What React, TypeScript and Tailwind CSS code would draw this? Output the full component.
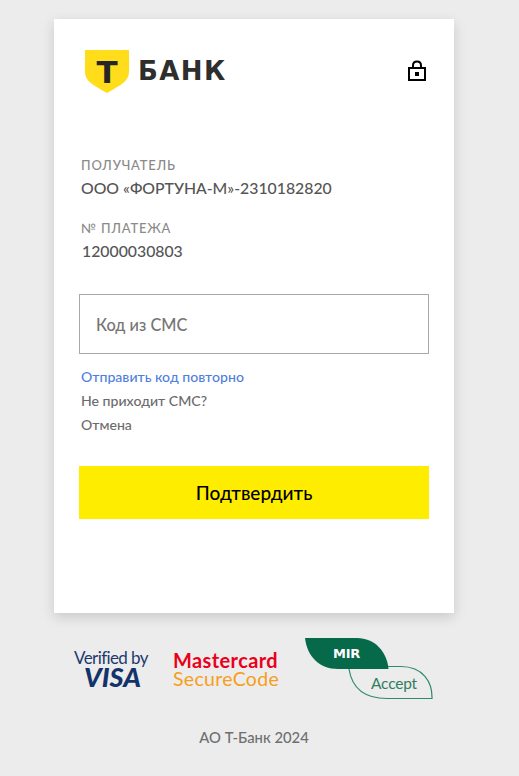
import React from 'react';

const font = { fontFamily: '"Lato", "Noto Sans", sans-serif' };

const Logo: React.FC = () => (
  <div className="flex items-center gap-[10px]">
    <div className="relative w-[44px] h-[43px]">
      <svg width="44" height="43" viewBox="0 0 44 43" className="block">
        <path d="M0 0H44V22C44 31 36 35 22 43C8 35 0 31 0 22Z" fill="#ffdd1a" />
      </svg>
      <span className="absolute inset-x-0 top-[7px] text-center text-[31px] leading-[31px] font-bold text-[#262626] font-['DejaVu_Sans']">
        Т
      </span>
    </div>
    <span className="text-[26px] leading-[26px] font-bold tracking-[1.4px] text-[#2e2e2e] font-['DejaVu_Sans'] mt-[-2px] ml-[-1px]">
      БАНК
    </span>
  </div>
);

const Lock: React.FC = () => (
  <svg width="18" height="21" viewBox="0 0 18 21" className="block">
    <path d="M5 9V5.500C5 3 6.500 1.500 9 1.500S13 3 13 5.500V9" fill="none" stroke="#000" strokeWidth="2" />
    <rect x="1" y="8" width="16" height="12" fill="none" stroke="#000" strokeWidth="2" />
    <rect x="7" y="12" width="4" height="4" fill="#000" />
  </svg>
);

const MirAccept: React.FC = () => (
  <div className="relative w-[128px] h-[62px]">
    <svg width="128" height="62" viewBox="0 0 128 62" className="block">
      <path d="M44 31C47 50 60 60.500 82 60.500H127C127.500 44 118 28.500 96 28.500H83" fill="none" stroke="#2f8a68" strokeWidth="1.200" />
      <path d="M0 0H52C70 0 82 14 83.500 31H33C14 31 2 18 0 0Z" fill="#05694a" />
    </svg>
    <span className="absolute left-[28px] top-[9px] text-[13px] leading-[13px] font-black text-white font-['DejaVu_Sans'] tracking-[-0.3px]">
      MIR
    </span>
    <span className="absolute left-[66px] top-[36px] text-[15.500px] leading-[18px] text-[#2f7f60] font-['Lato'] tracking-[-0.2px]">
      Accept
    </span>
  </div>
);

export default function App() {
  return (
    <div className="min-h-[776px] bg-[#ececec]" style={font}>
      <div className="ml-[54px] w-[454px]">
        <div className="h-[19px]" />
        <div className="w-[400px] h-[594px] bg-white shadow-[0_4px_12px_rgba(0,0,0,0.15)] px-[25px]">
          <div className="flex items-start justify-between pt-[31px] pl-[6px] pr-[3px]">
            <Logo />
            <div className="mt-[10px]">
              <Lock />
            </div>
          </div>

          <div className="mt-[64px] pl-[2px] text-[13px] leading-[16px] tracking-[0.8px] font-medium text-[#8a8a8a]">ПОЛУЧАТЕЛЬ</div>
          <div className="mt-[5px] pl-[2px] text-[15.800px] leading-[20px] font-medium text-[#555]">ООО «ФОРТУНА-М»-2310182820</div>
          <div className="mt-[22px] pl-[2px] text-[13px] leading-[16px] tracking-[0.8px] font-medium text-[#8a8a8a]">№ ПЛАТЕЖА</div>
          <div className="mt-[5px] pl-[3px] text-[15.800px] leading-[20px] font-medium text-[#555]">12000030803</div>

          <div className="mt-[33px] w-[350px] h-[60px] border border-[#a8a8a8] flex items-center pl-[16px] pt-[2px] text-[16.300px] font-medium text-[#757575]">
            Код из СМС
          </div>

          <div className="mt-[13px] pl-[2px] text-[14.100px] leading-[20px] font-medium text-[#4f7fdc]">Отправить код повторно</div>
          <div className="mt-[4px] pl-[2px] text-[14.100px] leading-[20px] font-medium text-[#6b6b6b]">Не приходит СМС?</div>
          <div className="mt-[4px] pl-[2px] text-[14.100px] leading-[20px] font-medium text-[#6b6b6b]">Отмена</div>

          <div className="mt-[31px] w-[350px] h-[53px] bg-[#ffed00] flex items-center justify-center pt-[2px] text-[19px] font-medium text-black">
            Подтвердить
          </div>
        </div>

        <div className="relative flex items-start mt-[25px] w-[400px] h-[62px]">
          <div className="ml-[19px] mt-[11px] w-[76px] flex flex-col items-center">
            <span className="text-[17px] leading-[17px] tracking-[-0.6px] whitespace-nowrap text-[#1d3a6e]">Verified by</span>
            <span className="pl-[3px] text-[27px] leading-[21px] font-black italic text-[#14336b]">VISA</span>
          </div>
          <div className="ml-[24px] mt-[13px] flex flex-col">
            <span className="text-[20px] leading-[19px] tracking-[0.4px] font-bold text-[#eb001b]">Mastercard</span>
            <span className="text-[19.500px] leading-[18px] tracking-[0.3px] text-[#f79e1b]">SecureCode</span>
          </div>
          <div className="absolute left-[251px] top-0">
            <MirAccept />
          </div>
        </div>

        <div className="w-[400px] mt-[27px] text-center text-[14.800px] leading-[20px] font-medium text-[#6f6f6f]">АО Т-Банк 2024</div>
      </div>
    </div>
  );
}
